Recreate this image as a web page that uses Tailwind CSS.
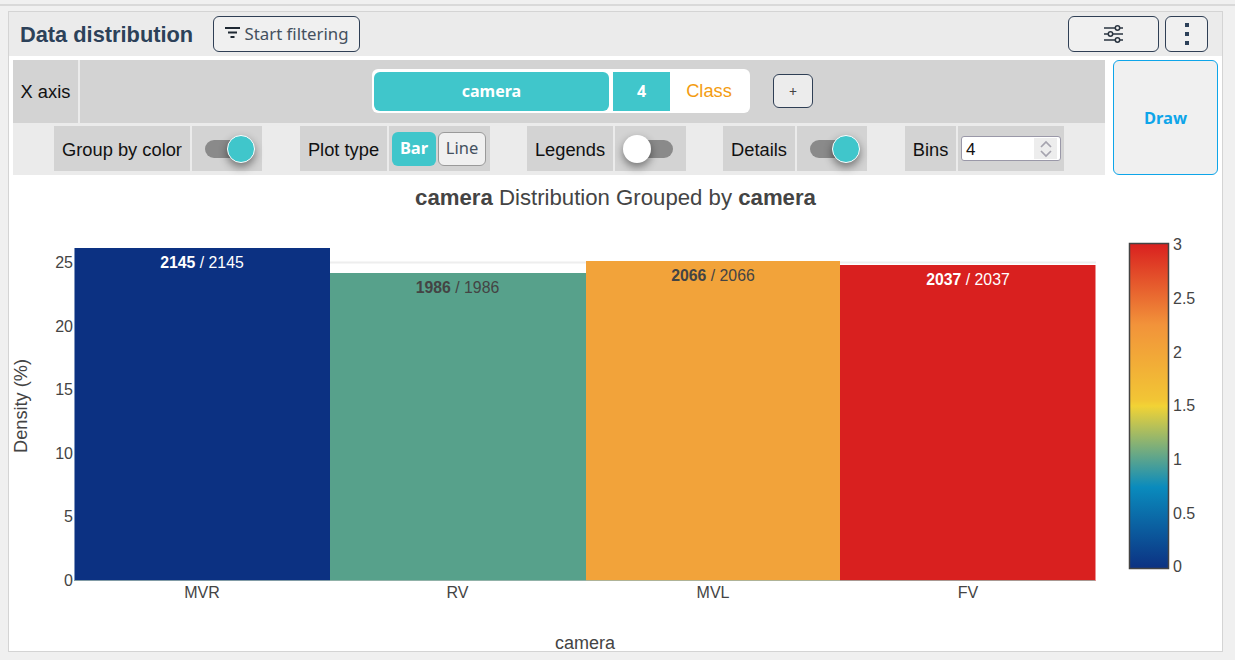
<!doctype html>
<html>
<head>
<meta charset="utf-8">
<script src="https://cdn.jsdelivr.net/npm/@tailwindcss/browser@4"></script>
</head>
<body class="bg-[#f0f0f0] h-[660px] overflow-hidden font-['Liberation_Sans',sans-serif] text-black">
<div class="pt-[4px]"><div class="h-[2px] bg-[#d9d9d9]"></div></div>
<div class="ml-[8px] mt-[5px] w-[1215px] h-[641px] border border-[#d4d4d4] bg-white box-border">
  <header class="h-[44px] bg-[#ebebeb] flex items-center pl-[11px] pr-[14px]">
    <h1 class="text-[21.8px] font-bold text-[#2c4159] w-[193px] leading-none pt-[1px]">Data distribution</h1>
    <button class="w-[147px] h-[36px] rounded-md border border-[#2f3f55] bg-[#f0f0f0] flex items-center justify-center gap-[5px] font-['Noto_Sans',sans-serif] text-[16.8px] text-[#44505e] whitespace-nowrap">
      <svg width="15" height="11" viewBox="0 0 15 11" class="mt-[-3px] shrink-0"><path d="M0 1h15M3 5.5h9M5.5 10h4" stroke="#1f2933" stroke-width="1.8" fill="none"/></svg>
      Start filtering
    </button>
    <div class="ml-auto flex gap-[6px]">
      <button class="w-[91px] h-[36px] rounded-md border border-[#2f3f55] bg-[#f0f0f0] flex items-center justify-center">
        <svg width="19" height="18" viewBox="0 0 19 18" fill="none" stroke="#2a3440" stroke-width="1.5"><path d="M0 3h11M16 3h3M0 9h4M9 9h10M0 15h11M16 15h3"/><circle cx="13.5" cy="3" r="2.2"/><circle cx="6.5" cy="9" r="2.2"/><circle cx="13.5" cy="15" r="2.2"/></svg>
      </button>
      <button class="w-[43px] h-[36px] rounded-md border border-[#2f3f55] bg-[#f0f0f0] flex flex-col items-center justify-center gap-[5px]">
        <span class="w-[4px] h-[4px] bg-[#2c4159]"></span><span class="w-[4px] h-[4px] bg-[#2c4159]"></span><span class="w-[4px] h-[4px] bg-[#2c4159]"></span>
      </button>
    </div>
  </header>
  <div class="flex pl-[4px] pt-[4px] h-[119px]">
    <div class="w-[1092px]">
      <div class="h-[63px] bg-[#d3d3d3] flex items-center relative">
        <div class="w-[65px] h-full flex items-center justify-center text-[18.3px] text-[#111]">X axis</div>
        <div class="w-[2px] h-full bg-[#ebebeb]"></div>
        <div class="ml-[292px] w-[378px] h-[44px] bg-white rounded-md flex items-center pl-[2px] mt-[-1px]">
          <div class="w-[235px] h-[39px] bg-[#40c6cb] rounded-md flex items-center justify-center font-['Noto_Sans',sans-serif] font-bold text-[16px] text-white">camera</div>
          <div class="ml-[4px] w-[57px] h-[39px] bg-[#40c6cb] flex items-center justify-center font-['Noto_Sans',sans-serif] font-bold text-[16px] text-white">4</div>
          <div class="flex-1 text-center text-[18.3px] text-[#f39c12] pr-[2px]">Class</div>
        </div>
        <button class="ml-[23px] w-[40px] h-[34px] rounded-md border border-[#2f3f55] bg-[#ececec] font-['Noto_Sans',sans-serif] text-[14px] text-[#444] mt-[-1px]">+</button>
      </div>
      <div class="h-[52px] bg-[#ebebeb] pt-[3px] flex text-[18.3px] text-[#111]">
        <div class="ml-[41px] w-[136px] h-[45px] pt-[3px] bg-[#d3d3d3] flex items-center justify-center">Group by color</div>
        <div class="ml-[2px] w-[70px] h-[45px] bg-[#d3d3d3] flex items-center justify-center">
          <div class="w-[45px] h-[18px] rounded-full bg-[#8a8a8a] relative"><span class="absolute right-[-5px] top-[-5px] w-[28px] h-[28px] rounded-full bg-[#40c6cb] border border-white shadow-[0_4px_8px_rgba(0,0,0,0.45)]"></span></div>
        </div>
        <div class="ml-[38px] w-[87px] h-[45px] pt-[3px] bg-[#d3d3d3] flex items-center justify-center">Plot type</div>
        <div class="ml-[2px] w-[101px] h-[45px] bg-[#d3d3d3] flex items-center pl-[3px] gap-[2px] font-['Noto_Sans',sans-serif] text-[16.5px]">
          <div class="w-[44px] h-[34px] bg-[#40c6cb] rounded-md flex items-center justify-center font-bold text-white">Bar</div>
          <div class="w-[48px] h-[34px] bg-[#f0f0f0] border border-[#9a9a9a] rounded-md flex items-center justify-center text-[#44505e]">Line</div>
        </div>
        <div class="ml-[37px] w-[86px] h-[45px] pt-[3px] bg-[#d3d3d3] flex items-center justify-center">Legends</div>
        <div class="ml-[2px] w-[71px] h-[45px] bg-[#d3d3d3] flex items-center justify-center">
          <div class="w-[45px] h-[18px] rounded-full bg-[#8a8a8a] relative"><span class="absolute left-[-5px] top-[-5px] w-[28px] h-[28px] rounded-full bg-white shadow-[0_4px_8px_rgba(0,0,0,0.45)]"></span></div>
        </div>
        <div class="ml-[37px] w-[72px] h-[45px] pt-[3px] bg-[#d3d3d3] flex items-center justify-center">Details</div>
        <div class="ml-[2px] w-[70px] h-[45px] bg-[#d3d3d3] flex items-center justify-center">
          <div class="w-[45px] h-[18px] rounded-full bg-[#8a8a8a] relative"><span class="absolute right-[-5px] top-[-5px] w-[28px] h-[28px] rounded-full bg-[#40c6cb] border border-white shadow-[0_4px_8px_rgba(0,0,0,0.45)]"></span></div>
        </div>
        <div class="ml-[38px] w-[51px] h-[45px] pt-[3px] bg-[#d3d3d3] flex items-center justify-center">Bins</div>
        <div class="ml-[2px] w-[106px] h-[45px] bg-[#d3d3d3] flex items-center justify-center">
          <div class="w-[100px] h-[25px] bg-white border border-[#9a98a8] rounded-[3px] flex items-center pl-[4px] pr-[3px] text-[17px]">
            <span class="flex-1 leading-none pt-[1px]">4</span>
            <span class="w-[23px] h-[21px] bg-[#ededed] flex items-center justify-center">
              <svg width="14" height="18" viewBox="0 0 14 18" fill="none" stroke="#a5a3ae" stroke-width="1.7"><path d="M2 7l5-5 5 5M2 11l5 5 5-5"/></svg>
            </span>
          </div>
        </div>
      </div>
    </div>
    <button class="ml-[8px] w-[105px] h-[115px] rounded-md border border-[#0ea5e9] bg-[#f0f0f0] font-['Noto_Sans',sans-serif] font-bold text-[16.5px] text-[#0ea5e9] pt-[2px]">Draw</button>
  </div>
  <svg class="block overflow-visible" width="1213" height="476" viewBox="9 175 1213 476" font-family="'Liberation Sans',sans-serif" fill="#444">
    <defs>
      <linearGradient id="cb" x1="0" y1="1" x2="0" y2="0">
        <stop offset="0" stop-color="#0c3182"/>
        <stop offset="0.25" stop-color="#0a8bbd"/>
        <stop offset="0.5" stop-color="#f2d335"/>
        <stop offset="0.52" stop-color="#f2c535"/>
        <stop offset="0.75" stop-color="#f2933a"/>
        <stop offset="1" stop-color="#d9201f"/>
      </linearGradient>
    </defs>
    <text x="615.5" y="205" font-size="22.2" text-anchor="middle"><tspan font-weight="bold">camera</tspan> Distribution Grouped by <tspan font-weight="bold">camera</tspan></text>
    <line x1="74" x2="1096" y1="262.5" y2="262.5" stroke="#eee" stroke-width="2"/>
    <rect x="74" y="248" width="256" height="332.5" fill="#0c3182"/>
    <rect x="330" y="273" width="256" height="307.5" fill="#57a18b"/>
    <rect x="586" y="261" width="254" height="319.5" fill="#f2a33a"/>
    <rect x="840" y="265" width="255" height="315.5" fill="#d9201f"/>
    <line x1="74.5" x2="74.5" y1="248" y2="581" stroke="#7f94bd"/>
    <line x1="74" x2="1096" y1="580.5" y2="580.5" stroke="#7f9f95" stroke-opacity="0.6"/>
    <line x1="1095.5" x2="1095.5" y1="265" y2="581" stroke="#ec9090"/>
    <g font-size="16" text-anchor="end">
      <text x="73" y="268">25</text><text x="73" y="331.5">20</text><text x="73" y="395">15</text><text x="73" y="458.5">10</text><text x="73" y="522">5</text><text x="73" y="585.5">0</text>
    </g>
    <g font-size="16" text-anchor="middle">
      <text x="202" y="598">MVR</text><text x="457.5" y="598">RV</text><text x="713" y="598">MVL</text><text x="968" y="598">FV</text>
    </g>
    <g font-size="15.8" text-anchor="middle">
      <text x="202" y="268" fill="#fff"><tspan font-weight="bold">2145</tspan> / 2145</text>
      <text x="457.5" y="293"><tspan font-weight="bold">1986</tspan> / 1986</text>
      <text x="713" y="281"><tspan font-weight="bold">2066</tspan> / 2066</text>
      <text x="968" y="285" fill="#fff"><tspan font-weight="bold">2037</tspan> / 2037</text>
    </g>
    <text x="585" y="649" font-size="18" text-anchor="middle">camera</text>
    <text transform="translate(27 406) rotate(-90)" font-size="18.2" text-anchor="middle">Density (%)</text>
    <rect x="1129.5" y="243.5" width="39" height="325" fill="url(#cb)" stroke="#444" stroke-width="1.5"/>
    <g font-size="16">
      <text x="1173" y="250">3</text><text x="1173" y="304">2.5</text><text x="1173" y="358">2</text><text x="1173" y="411">1.5</text><text x="1173" y="465">1</text><text x="1173" y="519">0.5</text><text x="1173" y="572">0</text>
    </g>
  </svg>
</div>
</body>
</html>
